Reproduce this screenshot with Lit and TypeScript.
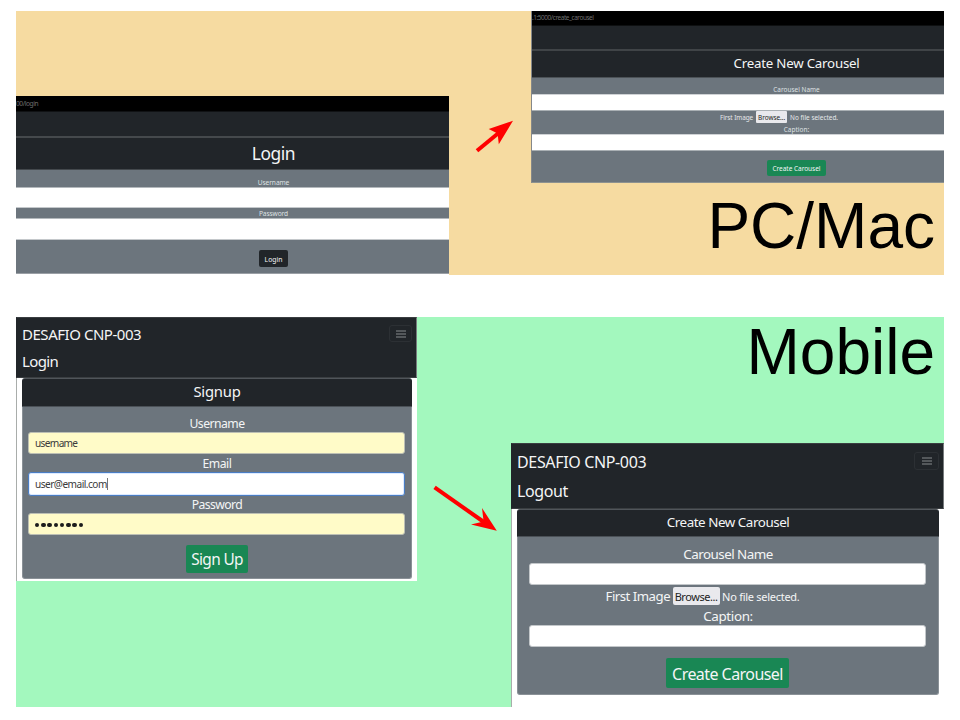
import { LitElement, html, css, svg } from "lit";
import { customElement, property } from "lit/decorators.js";

/** A run of text tracked so that it fills a given width. */
@customElement("fit-text")
class FitText extends LitElement {
  @property() text = "";
  @property({ type: Number }) w = 0;

  static styles = css`
    :host { display: block; flex: none; white-space: pre; }
    .run { display: inline-block; }
  `;

  firstUpdated() {
    const run = this.renderRoot.querySelector(".run") as HTMLElement;
    const natural = run.getBoundingClientRect().width;
    const fs = parseFloat(getComputedStyle(this).fontSize);
    const target = this.w + fs * 0.08;
    if (natural > 0) run.style.letterSpacing = `${(target - natural) / this.text.length}px`;
  }

  render() {
    return html`<span class="run">${this.text}</span>`;
  }
}

const t = (text: string, w: number, cls = "") =>
  html`<fit-text class=${cls} .text=${text} .w=${w}></fit-text>`;

const shared = css`
  :host { display: block; box-sizing: border-box; font-family: "Noto Sans", "Open Sans", sans-serif; color: #f4f5f6; }
  * { box-sizing: border-box; }
  .row { display: flex; justify-content: center; align-items: center; }
  .field { background: #fff; }
  .btn { display: flex; justify-content: center; align-items: center; background: #198754; }
`;

@customElement("desktop-login")
class DesktopLogin extends LitElement {
  static styles = [shared, css`
    :host { width: 433px; height: 179px; overflow: hidden; background: #fff; }
    .page { width: 515px; height: 178px; background: #6c757d; border-bottom: 1px solid #9a9fa5; }
    .url { height: 15px; background: #000; color: #6f6f6f; font-size: 6.6px; line-height: 16px; }
    .nav { height: 27px; background: #212529; border-top: 1px solid #101214; border-bottom: 2px solid #45494c; }
    .head { height: 32px; background: #212529; border-bottom: 1px solid #44494d; font-size: 17.4px; line-height: 28px; padding-bottom: 2px; }
    .label { font-size: 6.6px; line-height: 9px; color: #dfe1e3; }
    .user { height: 17px; align-items: flex-end; }
    .pass { height: 10px; padding-top: 1px; }
    .field { height: 21px; border-top: 1px solid #b3b8bc; border-bottom: 1px solid #c4c8cb; }
    .field.two { height: 22px; }
    .foot { height: 33px; padding-top: 4px; }
    .btn { width: 29px; height: 17px; border-radius: 2px; background: #212529; font-size: 6.8px; padding-top: 1px; }
  `];
  render() {
    return html`<div class="page">
      <div class="url">${t("00/login", 21.7)}</div>
      <div class="nav"></div>
      <div class="row head">${t("Login", 42)}</div>
      <div class="row label user">${t("Username", 31)}</div>
      <div class="field"></div>
      <div class="row label pass">${t("Password", 28.7)}</div>
      <div class="field two"></div>
      <div class="row foot"><div class="btn">${t("Login", 17.3)}</div></div>
    </div>`;
  }
}

@customElement("desktop-carousel")
class DesktopCarousel extends LitElement {
  static styles = [shared, css`
    :host { width: 413px; height: 172px; overflow: hidden; }
    .page { width: 530px; height: 172px; background: #6c757d; border-bottom: 1px solid #8d9290; border-left: 1px solid #85888a; }
    .url { height: 14px; background: #000; color: #6f6f6f; font-size: 6.4px; line-height: 13px; }
    .nav { height: 26px; background: #212529; border-top: 1px solid #0e1011; border-bottom: 2px solid #404447; }
    .head { height: 27px; background: #212529; border-bottom: 1px solid #4c5257; font-size: 13.3px; padding-bottom: 2px; }
    .label { font-size: 6.4px; line-height: 9px; height: 16px; align-items: flex-end; color: #dfe1e3; }
    .field { height: 17px; border-top: 1px solid #cfd2d5; border-bottom: 1px solid #aab0b4; }
    .file { height: 12px; gap: 3px; font-size: 6.4px; padding-right: 35px; color: #e6e8ea; }
    .pick { display: flex; justify-content: center; align-items: center; width: 31px; height: 12px; background: #e9e9ed; color: #222; border-radius: 1px; padding-top: 1px; }
    .cap { height: 11px; font-size: 6.4px; padding-top: 1px; color: #dfe1e3; }
    .foot { padding-top: 9px; }
    .btn { width: 59px; height: 16px; border-radius: 2px; font-size: 6.5px; padding-top: 1px; }
  `];
  render() {
    return html`<div class="page">
      <div class="url">${t(".1:5000/create_carousel", 61)}</div>
      <div class="nav"></div>
      <div class="row head">${t("Create New Carousel", 125)}</div>
      <div class="row label">${t("Carousel Name", 46)}</div>
      <div class="field"></div>
      <div class="row file">${t("First Image", 32.7)}<div class="pick">${t("Browse...", 26.5)}</div>${t("No file selected.", 47.5)}</div>
      <div class="row cap">${t("Caption:", 25)}</div>
      <div class="field"></div>
      <div class="row foot"><div class="btn">${t("Create Carousel", 47.5)}</div></div>
    </div>`;
  }
}

const mobile = css`
  :host { height: 264px; background: #fff; border-left: 1px solid #a9adab; }
  .top { background: #212529; margin-left: -1px; display: flex; justify-content: space-between; border: 1px solid #3a3e41; border-left-color: #212529; border-right-color: #777b7d; }
  .links { display: flex; flex-direction: column; }
  .toggler { display: flex; flex-direction: column; justify-content: center; align-items: center; gap: 1px; border: 1px solid #2c3034; border-radius: 3px; }
  .bar { width: 10px; height: 2px; background: #54585b; }
  .card { background: #6c757d; border-radius: 3px; border: 1px solid #8a9197; border-top-color: #50555a; }
  .head { background: #212529; border-bottom: 1px solid #4b5157; margin: 0 -1px; border-radius: 2px 2px 0 0; }
`;

const toggler = html`<div class="toggler"><div class="bar"></div><div class="bar"></div><div class="bar"></div></div>`;

@customElement("mobile-signup")
class MobileSignup extends LitElement {
  static styles = [shared, mobile, css`
    :host { width: 401px; }
    .top { height: 61px; padding: 5px 4px 0 5px; font-size: 15px; }
    .links { line-height: 22px; gap: 5px; }
    .toggler { width: 23px; height: 17px; margin-top: 2px; }
    .card { width: 390px; height: 201px; margin-left: 5px; }
    .head { height: 28px; font-size: 14.8px; padding-bottom: 3px; }
    .label { height: 18px; font-size: 12.2px; }
    .label.first { height: 25px; padding-top: 7px; }
    .label.pw { height: 17px; }
    .field { margin: 0 6px 0 5px; height: 22px; border-radius: 3px; display: flex; align-items: center; padding-left: 6px; background: #fffbc8; color: #3a3a3a; font-size: 10.1px; border: 1px solid #bcbfb4; }
    .focus { height: 24px; background: #fff; border: 1px solid #4a7dc4; box-shadow: inset 0 0 0 1px #dceaff; }
    .caret { width: 1px; height: 12px; background: #777; }
    .dots { gap: 1.85px; color: #212529; padding-top: 2px; }
    .dot { width: 4.4px; height: 4.4px; border-radius: 50%; background: #1c1c1c; }
    .foot { padding-top: 10px; }
    .btn { width: 62px; height: 28px; border-radius: 2px; font-size: 15.4px; padding-top: 1px; }
  `];
  render() {
    return html`
      <div class="top"><div class="links">${t("DESAFIO CNP-003", 118)}${t("Login", 35)}</div>${toggler}</div>
      <div class="card">
        <div class="row head">${t("Signup", 46)}</div>
        <div class="row label first">${t("Username", 54)}</div>
        <div class="field">${t("username", 41.5)}</div>
        <div class="row label">${t("Email", 28)}</div>
        <div class="field focus">${t("user@email.com", 71)}<div class="caret"></div></div>
        <div class="row label pw">${t("Password", 49.5)}</div>
        <div class="field dots">${Array.from({ length: 8 }, () => html`<div class="dot"></div>`)}</div>
        <div class="row foot"><div class="btn">${t("Sign Up", 50.5)}</div></div>
      </div>`;
  }
}

@customElement("mobile-carousel")
class MobileCarousel extends LitElement {
  static styles = [shared, mobile, css`
    :host { width: 433px; }
    .top { height: 66px; padding: 6px 4px 0 5px; font-size: 16px; }
    .links { line-height: 24px; gap: 5px; }
    .toggler { width: 25px; height: 18px; margin-top: 2px; }
    .card { width: 422px; height: 186px; margin-left: 5px; }
    .head { height: 27px; font-size: 13.4px; padding-bottom: 3px; }
    .label { height: 26px; padding-top: 8px; font-size: 13.4px; }
    .field { margin: 0 12px 0 11px; height: 22px; border-radius: 3px; border: 1px solid #c3c7ca; }
    .file { height: 22px; gap: 2.5px; font-size: 13.2px; padding-right: 51px; }
    .pick { display: flex; justify-content: center; align-items: center; width: 47px; height: 18px; background: #e9e9ed; color: #222; border-radius: 2px; font-size: 11px; padding-top: 1px; }
    .small { font-size: 11px; padding-top: 1px; }
    .cap { height: 18px; font-size: 13.4px; }
    .foot { padding-top: 11px; }
    .btn { width: 123px; height: 30px; border-radius: 2px; font-size: 16px; padding-top: 2px; margin-right: 1px; }
  `];
  render() {
    return html`
      <div class="top"><div class="links">${t("DESAFIO CNP-003", 128)}${t("Logout", 49.5)}</div>${toggler}</div>
      <div class="card">
        <div class="row head">${t("Create New Carousel", 121.5)}</div>
        <div class="row label">${t("Carousel Name", 88.5)}</div>
        <div class="field"></div>
        <div class="row file">${t("First Image", 63.5)}<div class="pick">${t("Browse...", 42)}</div>${t("No file selected.", 76.5, "small")}</div>
        <div class="row cap">${t("Caption:", 48.5)}</div>
        <div class="field"></div>
        <div class="row foot"><div class="btn">${t("Create Carousel", 109.5)}</div></div>
      </div>`;
  }
}

const arrow = (shaft: string, head: string) =>
  svg`<path d=${shaft} fill="none" stroke="#f00" stroke-width="4"/><path d=${head} fill="#f00"/>`;

@customElement("app-root")
class AppRoot extends LitElement {
  static styles = css`
    :host { display: block; width: 960px; height: 720px; box-sizing: border-box; padding: 11px 16px 0; background: #fff; overflow: hidden; }
    .band { display: flex; width: 928px; }
    .desktop { height: 264px; background: #f6dba1; align-items: flex-end; margin-bottom: 42px; }
    .phone { height: 390px; background: #a3f8be; }
    .col { display: flex; flex-direction: column; height: 100%; }
    .arrow { display: block; flex: none; }
    .title { font: 64px/64px "Liberation Sans", Arial, sans-serif; color: #000; text-align: right; padding-right: 9px; }
    .pc { margin-top: 11px; }
    .mob { margin-top: 3px; margin-bottom: 59px; }
  `;
  render() {
    return html`
      <div class="band desktop">
        <desktop-login></desktop-login>
        <svg class="arrow" width="82" height="264" viewBox="449 11 82 264">
          ${arrow("M477 150.8 L501 131", "M513 120.8 L488.7 129 L497.6 133.6 L498.8 144.3 Z")}
        </svg>
        <div class="col"><desktop-carousel></desktop-carousel><div class="title pc">PC/Mac</div></div>
      </div>
      <div class="band phone">
        <mobile-signup></mobile-signup>
        <svg class="arrow" width="94" height="390" viewBox="417 317 94 390">
          ${arrow("M434.6 487.4 L486 523.5", "M496.8 530.7 L482 508 L483.6 521.6 L471 524.6 Z")}
        </svg>
        <div class="col"><div class="title mob">Mobile</div><mobile-carousel></mobile-carousel></div>
      </div>`;
  }
}
